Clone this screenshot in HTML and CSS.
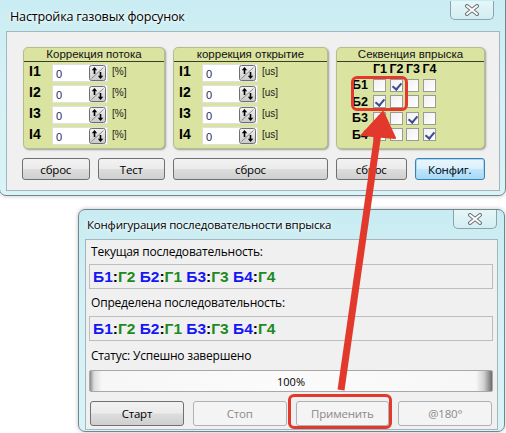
FILE: index.html
```html
<!DOCTYPE html>
<html>
<head>
<meta charset="utf-8">
<link rel="stylesheet" href="styles.css">
</head>
<body>
<div class="desk">

  <div class="win win-top">
    <div class="titlebar">
      <span class="title">Настройка газовых форсунок</span>
      <span class="close"><svg width="16" height="12" viewBox="0 0 16 12"><path d="M3 2 L13 10 M13 2 L3 10" stroke="#6f7478" stroke-width="4" stroke-linecap="round"/><path d="M3 2 L13 10 M13 2 L3 10" stroke="#ffffff" stroke-width="2" stroke-linecap="round"/></svg></span>
    </div>
    <div class="client">
      <div class="panels">
        <div class="panel">
          <div class="phead">Коррекция потока</div>
          <div class="rows">
            <div class="row"><b class="lbl">I1</b><span class="inp"><span class="val">0</span><svg class="spin" width="17" height="16" viewBox="0 0 17 16"><use href="#spin"/></svg></span><span class="unit">[%]</span></div>
            <div class="row"><b class="lbl">I2</b><span class="inp"><span class="val">0</span><svg class="spin" width="17" height="16" viewBox="0 0 17 16"><use href="#spin"/></svg></span><span class="unit">[%]</span></div>
            <div class="row"><b class="lbl">I3</b><span class="inp"><span class="val">0</span><svg class="spin" width="17" height="16" viewBox="0 0 17 16"><use href="#spin"/></svg></span><span class="unit">[%]</span></div>
            <div class="row"><b class="lbl">I4</b><span class="inp"><span class="val">0</span><svg class="spin" width="17" height="16" viewBox="0 0 17 16"><use href="#spin"/></svg></span><span class="unit">[%]</span></div>
          </div>
        </div>
        <div class="panel">
          <div class="phead">коррекция открытие</div>
          <div class="rows">
            <div class="row"><b class="lbl">I1</b><span class="inp"><span class="val">0</span><svg class="spin" width="17" height="16" viewBox="0 0 17 16"><use href="#spin"/></svg></span><span class="unit">[us]</span></div>
            <div class="row"><b class="lbl">I2</b><span class="inp"><span class="val">0</span><svg class="spin" width="17" height="16" viewBox="0 0 17 16"><use href="#spin"/></svg></span><span class="unit">[us]</span></div>
            <div class="row"><b class="lbl">I3</b><span class="inp"><span class="val">0</span><svg class="spin" width="17" height="16" viewBox="0 0 17 16"><use href="#spin"/></svg></span><span class="unit">[us]</span></div>
            <div class="row"><b class="lbl">I4</b><span class="inp"><span class="val">0</span><svg class="spin" width="17" height="16" viewBox="0 0 17 16"><use href="#spin"/></svg></span><span class="unit">[us]</span></div>
          </div>
        </div>
        <div class="panel">
          <div class="phead">Секвенция впрыска</div>
          <div class="seq">
            <span></span><b>Г1</b><b>Г2</b><b>Г3</b><b>Г4</b>
            <b>Б1</b><span class="cb"></span><span class="cb on"></span><span class="cb"></span><span class="cb"></span>
            <b>Б2</b><span class="cb on"></span><span class="cb"></span><span class="cb"></span><span class="cb"></span>
            <b>Б3</b><span class="cb"></span><span class="cb"></span><span class="cb on"></span><span class="cb"></span>
            <b>Б4</b><span class="cb"></span><span class="cb"></span><span class="cb"></span><span class="cb on"></span>
          </div>
        </div>
      </div>
      <div class="btnrow">
        <div class="bgroup"><span class="btn">сброс</span><span class="btn">Тест</span></div>
        <div class="bgroup"><span class="btn">сброс</span></div>
        <div class="bgroup"><span class="btn">сброс</span><span class="btn def">Конфиг.</span></div>
      </div>
    </div>
  </div>

  <div class="win win-bot">
    <div class="titlebar">
      <span class="title">Конфигурация последовательности впрыска</span>
      <span class="close"><svg width="16" height="12" viewBox="0 0 16 12"><path d="M3 2 L13 10 M13 2 L3 10" stroke="#6f7478" stroke-width="4" stroke-linecap="round"/><path d="M3 2 L13 10 M13 2 L3 10" stroke="#ffffff" stroke-width="2" stroke-linecap="round"/></svg></span>
    </div>
    <div class="client client2">
      <div class="lab l1">Текущая последовательность:</div>
      <div class="seqbox"><b class="bl">Б1</b>:<b class="gr">Г2</b> <b class="bl">Б2</b>:<b class="gr">Г1</b> <b class="bl">Б3</b>:<b class="gr">Г3</b> <b class="bl">Б4</b>:<b class="gr">Г4</b></div>
      <div class="lab l2">Определена последовательность:</div>
      <div class="seqbox"><b class="bl">Б1</b>:<b class="gr">Г2</b> <b class="bl">Б2</b>:<b class="gr">Г1</b> <b class="bl">Б3</b>:<b class="gr">Г3</b> <b class="bl">Б4</b>:<b class="gr">Г4</b></div>
      <div class="lab l3">Статус: Успешно завершено</div>
      <div class="progress">100%</div>
      <div class="btnrow2">
        <span class="btn big">Старт</span>
        <span class="btn big dis">Стоп</span>
        <span class="btn big dis">Применить</span>
        <span class="btn big dis">@180°</span>
      </div>
    </div>
  </div>

  <div class="hl hl1"></div>
  <div class="hl hl2"></div>

  <svg class="arrow" width="506" height="433" viewBox="0 0 506 433">
    <line x1="341" y1="390" x2="378" y2="133" stroke="#e2392c" stroke-width="7"/>
    <polygon points="383,112 395,138 362,135" fill="#e2392c" stroke="#e2392c" stroke-width="2" stroke-linejoin="round"/>
  </svg>

  <svg width="0" height="0" class="defs">
    <defs>
      <linearGradient id="sg" x1="0" y1="0" x2="0" y2="1">
        <stop offset="0" stop-color="#f4f4f4"/>
        <stop offset="1" stop-color="#c9c9c9"/>
      </linearGradient>
      <g id="spin">
        <rect x="0.5" y="0.5" width="16" height="15" rx="2" fill="url(#sg)" stroke="#6e6e6e"/>
        <path d="M2.5 13.5 L14.5 2.5" stroke="#8a8a8a" stroke-width="1"/>
        <path d="M5.5 9 V3.5" stroke="#000" stroke-width="1.6"/>
        <path d="M2.8 5.2 L5.5 2 L8.2 5.2 Z" fill="#000"/>
        <path d="M11.5 7 V12.5" stroke="#000" stroke-width="1.6"/>
        <path d="M8.8 10.8 L11.5 14 L14.2 10.8 Z" fill="#000"/>
      </g>
    </defs>
  </svg>
</div>
</body>
</html>
```
FILE: styles.css
```css
html, body {
  margin: 0;
  padding: 0;
  background: #ffffff;
}
.desk {
  position: relative;
  width: 506px;
  height: 433px;
  overflow: hidden;
  background: #ffffff;
  font-family: "Open Sans", "Noto Sans", sans-serif;
}
.defs { position: absolute; }

.win {
  position: absolute;
  box-sizing: border-box;
  background: linear-gradient(180deg, #c8ecf2 0%, #d4f1f5 40%, #d9f3f6 100%);
  border: 1px solid #6e8790;
  border-radius: 7px;
  display: flex;
  flex-direction: column;
  box-shadow: 0 0 4px rgba(0,0,0,0.25);
}
.win-top {
  left: -1px;
  top: -7px;
  width: 507px;
  height: 203px;
  padding: 0 5px 5px 6px;
}
.win-bot {
  left: 78px;
  top: 209px;
  width: 427px;
  height: 223px;
  padding: 0 6px 3px 6px;
}
.titlebar {
  height: 30px;
  position: relative;
  display: flex;
  align-items: center;
  flex-shrink: 0;
}
.win-top .titlebar { height: 37px; padding-top: 7px; box-sizing: border-box; }
.win-bot .titlebar { height: 29px; }
.title {
  font-size: 12px;
  color: #000;
  padding-left: 4px;
  letter-spacing: -0.2px;
  text-shadow: 0 0 6px #ffffff, 0 0 3px #ffffff;
}
.win-top .title { font-size: 12.6px; }
.win-bot .title { padding-left: 2px; font-size: 11.5px; }
.close {
  position: absolute;
  right: 1px;
  top: 0;
  width: 44px;
  height: 19px;
  box-sizing: border-box;
  border: 1px solid #8ea2a9;
  border-top: none;
  border-radius: 0 0 5px 5px;
  background: linear-gradient(180deg, #e6f6f8, #d2eef2);
  display: flex;
  align-items: center;
  justify-content: center;
}
.win-top .close { top: 7px; right: 6px; }
.win-bot .close { right: 1px; height: 19px; }

.client {
  flex: 1;
  background: #f0f0f0;
  border: 1px solid #a4b6bd;
  box-sizing: border-box;
  padding: 15px 14px 10px 16px;
  display: flex;
  flex-direction: column;
  font-family: "Liberation Sans", Arial, sans-serif;
}

.panels {
  display: grid;
  grid-template-columns: 142px 155px 149px;
  column-gap: 8px;
  height: 102px;
}
.panel {
  background: #dae39f;
  border: 1px solid #b6bd8a;
  border-radius: 5px;
  box-shadow: 1px 1px 2px rgba(0,0,0,0.35);
  display: flex;
  flex-direction: column;
}
.phead {
  font-size: 11.5px;
  text-align: center;
  color: #111;
  height: 13px;
  line-height: 13px;
  border-bottom: 1px solid #3c3c28;
  margin: 0 0 2px 0;
}
.rows {
  display: flex;
  flex-direction: column;
  gap: 3px;
  padding-left: 4px;
}
.row {
  display: flex;
  align-items: center;
  height: 18px;
}
.lbl {
  width: 23px;
  font-size: 14px;
  font-weight: bold;
  color: #000;
  position: relative;
  top: -2px;
  padding-left: 1px;
}
.inp {
  width: 56px;
  height: 18px;
  background: #fff;
  border: 1px solid #e0e0e0;
  box-sizing: border-box;
  display: flex;
  align-items: center;
  justify-content: space-between;
  padding: 0 1px 0 3px;
}
.val {
  font-size: 11px;
  color: #2a1e60;
  position: relative;
  top: 1px;
}
.spin { display: block; flex-shrink: 0; }
.unit {
  font-size: 10px;
  color: #222;
  margin-left: 4px;
  position: relative;
  top: -2px;
}

.seq {
  display: grid;
  grid-template-columns: 21px repeat(4, 16.5px);
  grid-template-rows: 17px repeat(4, 16.5px);
  margin-top: -4px;
  padding-left: 15px;
  align-items: center;
  font-size: 12.5px;
}
.seq b { color: #000; font-weight: bold; }
.seq > b:nth-child(-n+5) { position: relative; top: 0; }
.cb {
  width: 13px;
  height: 13px;
  box-sizing: border-box;
  border: 1px solid #9a9a9a;
  background: linear-gradient(135deg, #f0f0f0, #ffffff);
  position: relative;
}
.cb.on::after {
  content: "";
  position: absolute;
  left: 3px;
  top: 1px;
  width: 4px;
  height: 7px;
  border: solid #3a4e94;
  border-width: 0 2px 2px 0;
  transform: rotate(40deg);
}

.btnrow {
  display: grid;
  grid-template-columns: 143px 155px 149px;
  column-gap: 8px;
  margin-top: 9px;
  margin-left: -1px;
}
.bgroup {
  display: flex;
  gap: 8px;
}
.btn {
  flex: 1;
  height: 22px;
  box-sizing: border-box;
  border: 1px solid #707070;
  border-radius: 3px;
  background: linear-gradient(180deg, #f2f2f2 0%, #ebebeb 48%, #dddddd 52%, #cfcfcf 100%);
  display: flex;
  align-items: center;
  justify-content: center;
  font-family: "Open Sans", "Noto Sans", sans-serif;
  font-size: 11.5px;
  color: #000;
  letter-spacing: -0.2px;
}
.btn.def {
  border-color: #3c7fb1;
  background: linear-gradient(180deg, #eaf6fd 0%, #d9f0fc 48%, #bee6fd 52%, #a7d9f5 100%);
  box-shadow: inset 0 0 0 1px #9fdcf7;
}

.client2 {
  padding: 4px 4px 3px 3px;
  font-family: "Open Sans", "Noto Sans", sans-serif;
}
.lab {
  font-size: 12px;
  line-height: 16px;
  color: #000;
  padding-left: 2px;
  letter-spacing: -0.2px;
}
.l2 { margin-top: 6px; }
.l3 { margin-top: 7px; }
.seqbox {
  margin-top: 4px;
  height: 25px;
  line-height: 23px;
  box-sizing: border-box;
  border: 1px solid #bdbdbd;
  background: #f0f0f0;
  padding-left: 3px;
  font-family: "Liberation Sans", Arial, sans-serif;
  font-weight: bold;
  font-size: 15.5px;
  color: #000;
  white-space: pre;
}
.l2 + .seqbox { margin-top: 5px; }
.bl { color: #1616f5; }
.gr { color: #1e8a1e; }
.progress {
  margin-top: 6px;
  height: 22px;
  box-sizing: border-box;
  border: 1px solid #a8a8a8;
  border-radius: 2px;
  background: linear-gradient(90deg, #8a8a8a 0px, #dcdcdc 4px, #f7f7f7 12px, #fbfbfb 50%, #f7f7f7 calc(100% - 16px), #d0d0d0 calc(100% - 8px), #6c6c6c 100%);
  display: flex;
  align-items: center;
  justify-content: center;
  font-size: 11px;
  color: #000;
}
.btnrow2 {
  margin-top: 9px;
  display: flex;
  gap: 9px;
  padding: 0 1px;
}
.btn.big { height: 25px; font-size: 11.5px; }
.btn.dis {
  border-color: #adb2b5;
  background: #f4f4f4;
  color: #8a8a8a;
}

.hl {
  position: absolute;
  border: 3.5px solid #e2392c;
  border-radius: 6px;
  box-sizing: border-box;
}
.hl1 { left: 351px; top: 76px; width: 57px; height: 35px; }
.hl2 { left: 288px; top: 394px; width: 104px; height: 35px; }

.arrow {
  position: absolute;
  left: 0;
  top: 0;
  pointer-events: none;
}
```
